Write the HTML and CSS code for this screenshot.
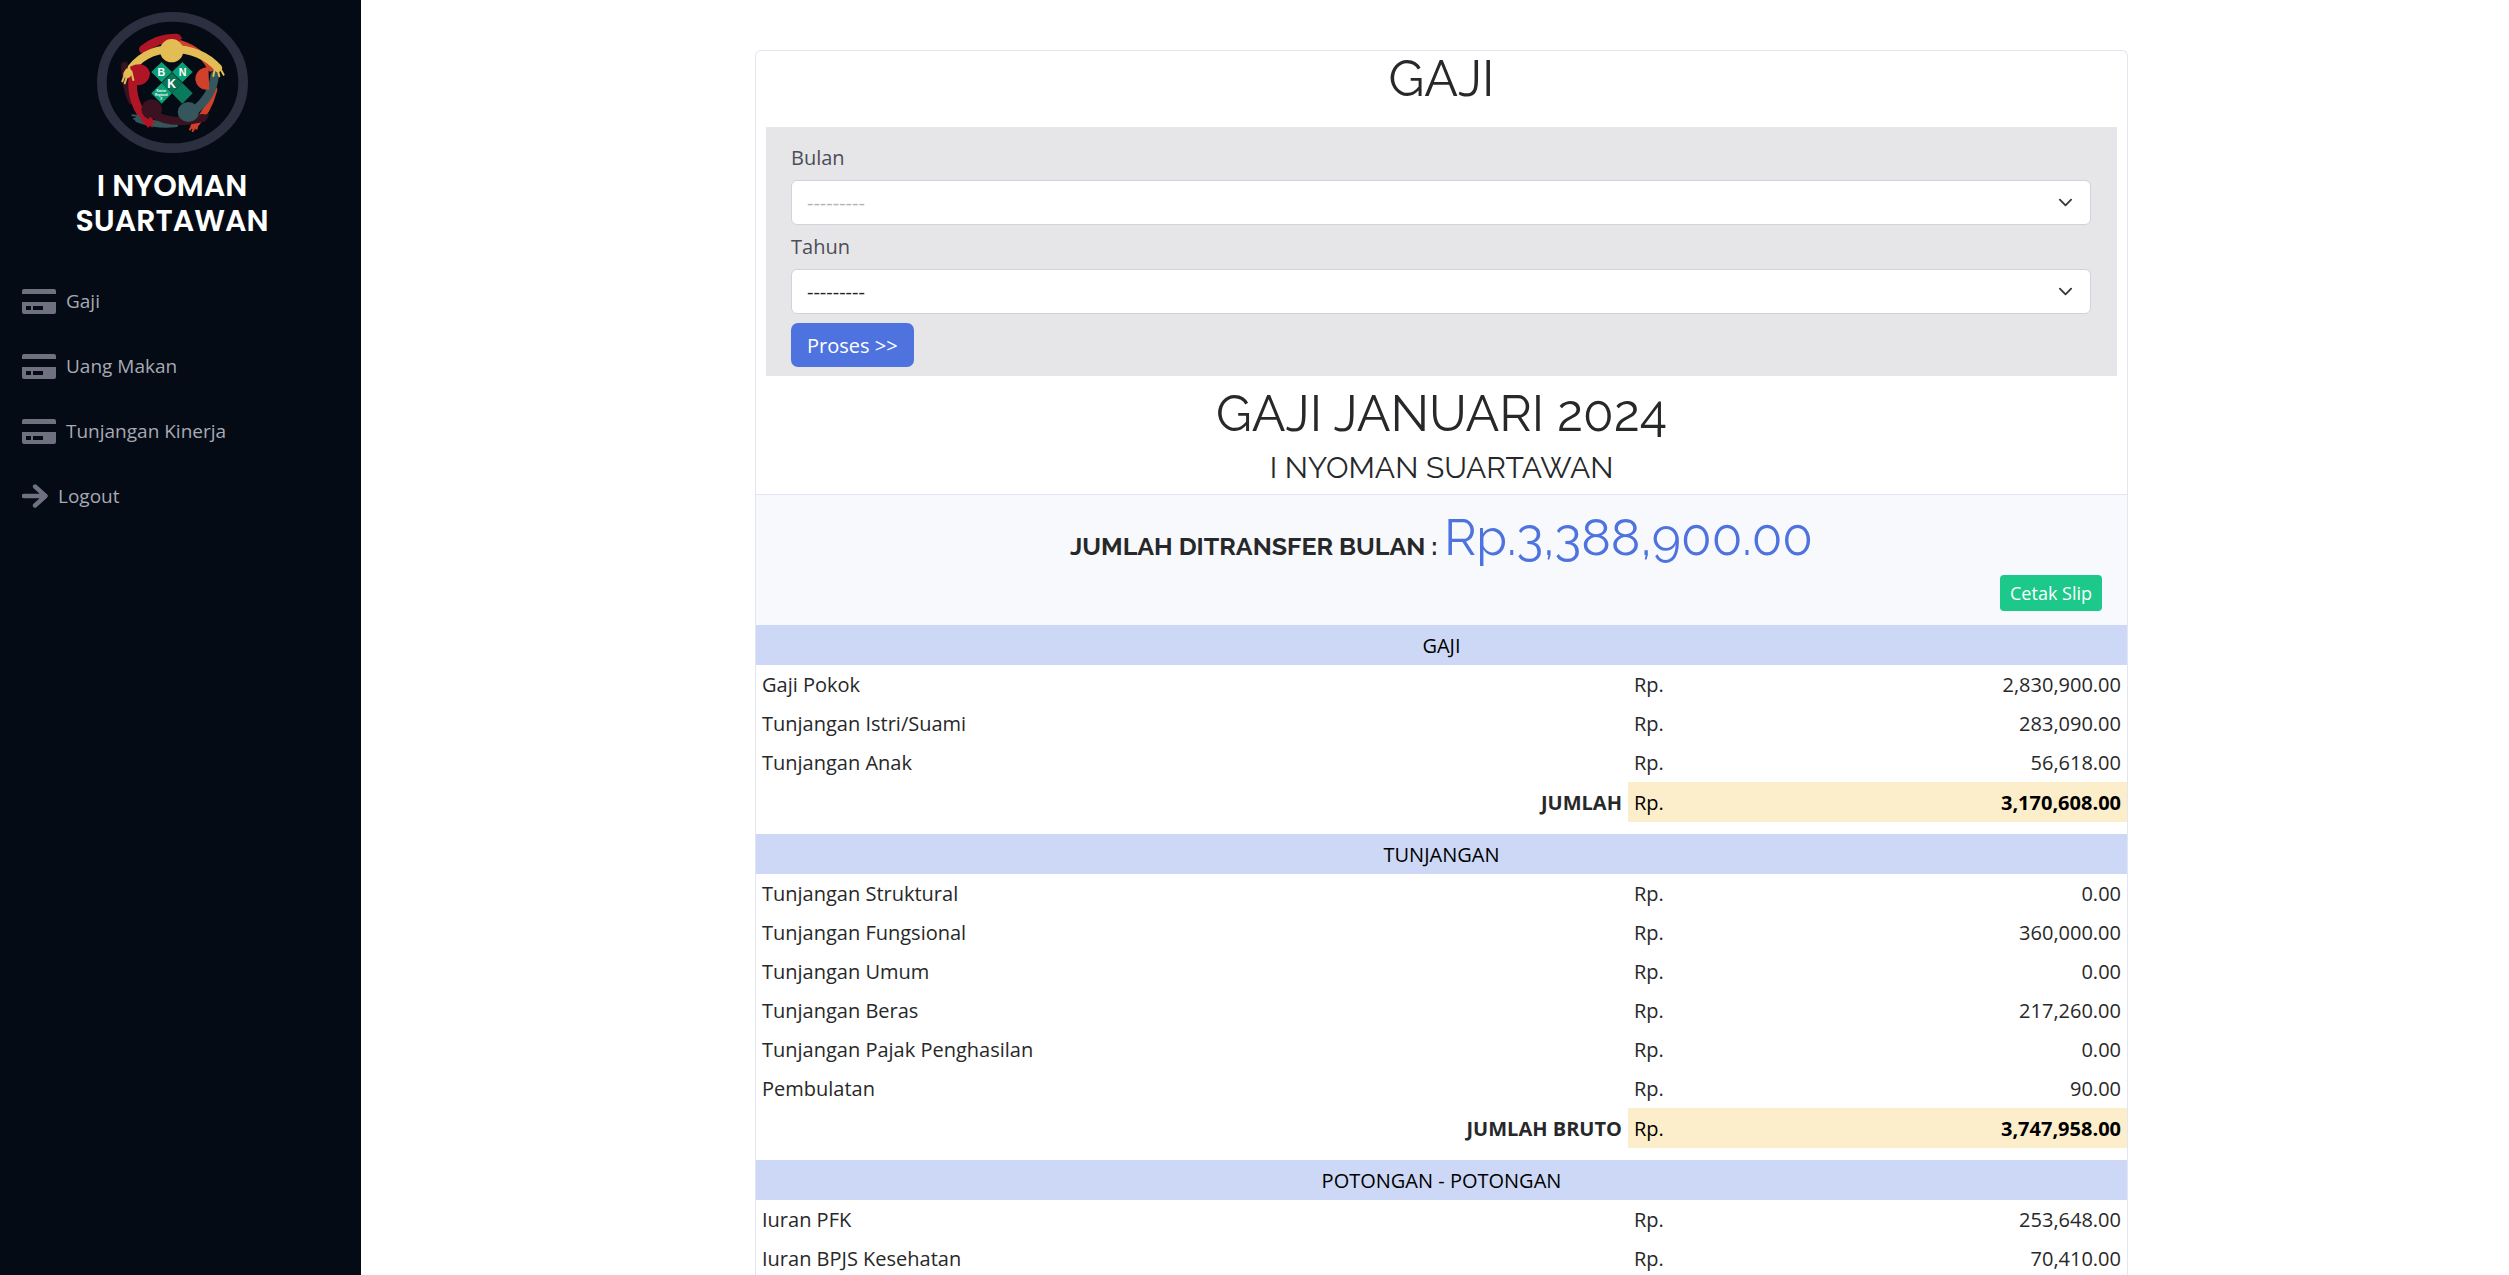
FILE: index.html
```html
<!DOCTYPE html>
<html lang="id">
<head>
<meta charset="utf-8">
<meta name="viewport" content="width=device-width, initial-scale=1">
<title>Gaji</title>
<link rel="stylesheet" href="styles.css">
</head>
<body>
<svg width="0" height="0" class="sprite" aria-hidden="true">
  <symbol id="card" viewBox="0 0 34 25"><path fill-rule="evenodd" d="M2 0H32Q34 0 34 2V5H0V2Q0 0 2 0ZM0 13H34V23Q34 25 32 25H2Q0 25 0 23ZM4 17V21H9V17ZM11 17V21H21V17Z"/></symbol>
  <symbol id="arrow" viewBox="0 0 26 24"><path d="M2 12H23M13 2.500L23.500 12L13 21.500" fill="none" stroke="currentColor" stroke-width="4.400" stroke-linecap="round" stroke-linejoin="round"/></symbol>
</svg>
<div class="app">
  <aside class="sidebar">
    <svg class="logo" viewBox="51 36 453 423" preserveAspectRatio="none" role="img" aria-label="BKN">
      <ellipse cx="277.500" cy="247.500" rx="212" ry="197" fill="#040b14" stroke="#2c2f3f" stroke-width="29"/>
      <g fill="none" stroke-linecap="round" stroke-linejoin="round">
        <path d="M132 195Q130 255 153 305" stroke="#3a1220" stroke-width="16"/>
        <path d="M175 358Q230 378 285 372" stroke="#34565c" stroke-width="20"/>
        <path d="M300 130Q365 150 392 205M402 270Q385 335 342 378" stroke="#d0402a" stroke-width="20"/>
        <path d="M190 148Q235 112 290 114M158 232Q152 315 206 366" stroke="#b01525" stroke-width="26"/>
        <path d="M404 226Q398 290 340 334" stroke="#34565c" stroke-width="26"/>
        <path d="M212 338Q270 378 368 354" stroke="#3a1220" stroke-width="24"/>
        <path d="M142 222Q185 150 275 146Q365 148 414 204" stroke="#e2bd55" stroke-width="24"/>
      </g>
      <path d="M150 200Q195 180 210 218Q208 256 165 256Z" fill="#b01525"/>
      <path d="M385 200Q345 206 346 240Q352 272 388 269Z" fill="#d0402a"/>
      <ellipse cx="215" cy="328" rx="31" ry="30" fill="#3a1220"/>
      <ellipse cx="325" cy="336" rx="32" ry="30" fill="#34565c"/>
      <circle cx="275" cy="152" r="35" fill="#e2bd55"/>
      <g fill="none" stroke-width="6" stroke-linecap="round">
        <path d="M134 226L127 244M142 226L134 250M154 214L160 240M404 208L400 228M412 206L418 229M420 204L431 224" stroke="#e2bd55"/>
        <path d="M126 210V190M133 206V186M141 204V186" stroke="#3a1220" stroke-width="4"/>
        <path d="M282 108L298 107M284 114L303 114M198 362L205 380M206 366L216 379M210 354L222 367" stroke="#b01525"/>
        <path d="M157 346L176 348M162 356L180 356" stroke="#34565c"/>
        <path d="M338 376L330 388M346 378L338 393M352 372L350 386" stroke="#d0402a"/>
        <path d="M366 350L384 344M366 358L382 352" stroke="#3a1220"/>
      </g>
      <g fill="#0c9f75">
        <path d="M245 186L276 216L245 247L214 216Z"/><path d="M307 186L338 216L307 247L276 216Z"/>
        <path d="M245 249L276 280L245 311L214 280Z"/><path d="M307 249L338 280L307 311L276 280Z" fill="#097b5c"/>
        <path d="M276 218L307 249L276 280L245 249Z" fill="#087456"/>
      </g>
      <g class="logo-text" fill="#fff" text-anchor="middle">
        <text x="244" y="229" font-size="32">B</text><text x="308" y="229" font-size="32">N</text><text x="275" y="263" font-size="36">K</text>
        <text x="244" y="277" font-size="9">Kantor</text><text x="244" y="288" font-size="9">Regional</text><text x="244" y="299" font-size="9">X</text>
      </g>
    </svg>
    <h1 class="user">I NYOMAN<br>SUARTAWAN</h1>
    <nav class="menu">
      <a href="#gaji"><svg class="i-card"><use href="#card"/></svg>Gaji</a>
      <a href="#makan"><svg class="i-card"><use href="#card"/></svg>Uang Makan</a>
      <a href="#kinerja"><svg class="i-card"><use href="#card"/></svg>Tunjangan Kinerja</a>
      <a href="#logout"><svg class="i-arrow"><use href="#arrow"/></svg>Logout</a>
    </nav>
  </aside>
  <main class="main">
    <section class="panel">
      <h2 class="title">GAJI</h2>
      <form class="filter">
        <label for="bulan">Bulan</label>
        <div class="pick"><select id="bulan" class="muted"><option>---------</option></select><svg viewBox="0 0 16 16"><path d="M2 5l6 6 6-6"/></svg></div>
        <label for="tahun">Tahun</label>
        <div class="pick"><select id="tahun"><option>---------</option></select><svg viewBox="0 0 16 16"><path d="M2 5l6 6 6-6"/></svg></div>
        <button type="button" class="btn">Proses &gt;&gt;</button>
      </form>
      <h2 class="period">GAJI JANUARI 2024</h2>
      <h3 class="person">I NYOMAN SUARTAWAN</h3>
      <div class="summary">
        <p class="total"><strong>JUMLAH DITRANSFER BULAN :</strong> <span>Rp.3,388,900.00</span></p>
        <button type="button" class="print">Cetak Slip</button>
      </div>
      <table>
        <colgroup><col class="c-name"><col class="c-rp"><col></colgroup>
        <tbody>
          <tr class="head"><th colspan="3">GAJI</th></tr>
          <tr><td>Gaji Pokok</td><td>Rp.</td><td>2,830,900.00</td></tr>
          <tr><td>Tunjangan Istri/Suami</td><td>Rp.</td><td>283,090.00</td></tr>
          <tr><td>Tunjangan Anak</td><td>Rp.</td><td>56,618.00</td></tr>
          <tr class="sum"><th>JUMLAH</th><td>Rp.</td><td>3,170,608.00</td></tr>
          <tr class="gap"><td colspan="3"></td></tr>
        </tbody>
        <tbody>
          <tr class="head"><th colspan="3">TUNJANGAN</th></tr>
          <tr><td>Tunjangan Struktural</td><td>Rp.</td><td>0.00</td></tr>
          <tr><td>Tunjangan Fungsional</td><td>Rp.</td><td>360,000.00</td></tr>
          <tr><td>Tunjangan Umum</td><td>Rp.</td><td>0.00</td></tr>
          <tr><td>Tunjangan Beras</td><td>Rp.</td><td>217,260.00</td></tr>
          <tr><td>Tunjangan Pajak Penghasilan</td><td>Rp.</td><td>0.00</td></tr>
          <tr><td>Pembulatan</td><td>Rp.</td><td>90.00</td></tr>
          <tr class="sum"><th>JUMLAH BRUTO</th><td>Rp.</td><td>3,747,958.00</td></tr>
          <tr class="gap"><td colspan="3"></td></tr>
        </tbody>
        <tbody>
          <tr class="head"><th colspan="3">POTONGAN - POTONGAN</th></tr>
          <tr><td>Iuran PFK</td><td>Rp.</td><td>253,648.00</td></tr>
          <tr><td>Iuran BPJS Kesehatan</td><td>Rp.</td><td>70,410.00</td></tr>
        </tbody>
      </table>
    </section>
  </main>
</div>
</body>
</html>
```
FILE: styles.css
```css
* { box-sizing: border-box; }
body { margin: 0; background: #fff; color: #272829; font: 19px/29px "Open Sans", sans-serif; }
h1, h2, h3, p { margin: 0; }
.sprite { position: absolute; }
.app { display: flex; height: 100vh; }

.sidebar { flex: 0 0 361px; background: #040b14; display: flex; flex-direction: column; padding-top: 12px; overflow: hidden; }
.logo { width: 151px; height: 141px; margin-left: 97px; flex: none; }
.logo-text { font-family: "Liberation Sans Narrow", "Liberation Sans", sans-serif; font-weight: bold; }
.user { margin-top: 15px; width: 344px; text-align: center; color: #fff; font: 600 30px/35px Poppins, Inter, sans-serif; }
.menu { display: flex; flex-direction: column; gap: 25px; margin-top: 43px; padding-left: 22px; }
.menu a { display: flex; align-items: center; gap: 10px; height: 40px; color: #a8a9b4; text-decoration: none; }
.menu svg { color: #6f7180; fill: currentColor; }
.i-card { width: 34px; height: 25px; }
.i-arrow { width: 26px; height: 24px; }

.main { flex: 1; display: grid; grid-template-columns: 394fr 1373fr 381fr; align-items: start; padding-top: 50px; overflow-y: auto; scrollbar-width: none; }
.panel { grid-column: 2; border: 1px solid #e3e6f0; border-bottom: 0; border-radius: 6px 6px 0 0; }
.title, .period, .person { font-family: Raleway, Lato, sans-serif; font-weight: 400; text-align: center; }
.title { font-size: 50px; line-height: 56px; margin-bottom: 20px; }
.period { font-size: 50px; line-height: 56px; margin-top: 10px; }
.person { font-size: 30px; line-height: 34px; margin: 9px 0; }

.filter { margin: 0 10px; padding: 16px 26px 9px 25px; background: #e6e6e8; color: #4c4d58; display: flex; flex-direction: column; align-items: flex-start; }
.filter label { display: block; margin-bottom: 8px; font-size: 20px; }
.pick { position: relative; width: 100%; margin-bottom: 7px; }
.pick select { appearance: none; width: 100%; height: 45px; padding: 0 15px; border: 1px solid #ced4da; border-radius: 6px; background: #fff; color: #212529; font: inherit; font-size: 20px; }
.pick select.muted { color: #b9b4ae; }
.pick svg { position: absolute; right: 18px; top: 15px; width: 15px; height: 15px; fill: none; stroke: #343a40; stroke-width: 2; stroke-linecap: round; stroke-linejoin: round; pointer-events: none; }
button { border: 0; color: #fff; font: inherit; }
.btn { height: 44px; padding: 0 16px; margin-top: 2px; border-radius: 7px; background: #4e73df; font-size: 20px; }

.summary { border-top: 1px solid #e3e6f0; background: #f8f9fc; height: 131px; padding: 15px 25px 0; display: flex; flex-direction: column; }
.total { font: 25px/56px Raleway, Lato, sans-serif; text-align: center; height: 56px; }
.total span { font-size: 50px; color: #4e73df; }
.print { align-self: flex-end; height: 36px; margin-top: 9px; padding: 0 10px; border-radius: 4px; background: #1cc88a; font-size: 18px; }

table { width: 100%; table-layout: fixed; border-collapse: collapse; font-size: 20px; }
.c-name { width: 63.6%; }
.c-rp { width: 10%; }
td, th { height: 39px; padding: 5px 6px; text-align: left; }
td:nth-child(3) { text-align: right; }
.head th { height: 40px; background: #cdd8f6; color: #000; text-align: center; font-weight: 400; }
.sum th { text-align: right; }
.sum td { height: 40px; background: #fdeecb; color: #000; }
.sum td:last-child { font-weight: 700; }
.gap td { height: 12px; padding: 0; }
```
